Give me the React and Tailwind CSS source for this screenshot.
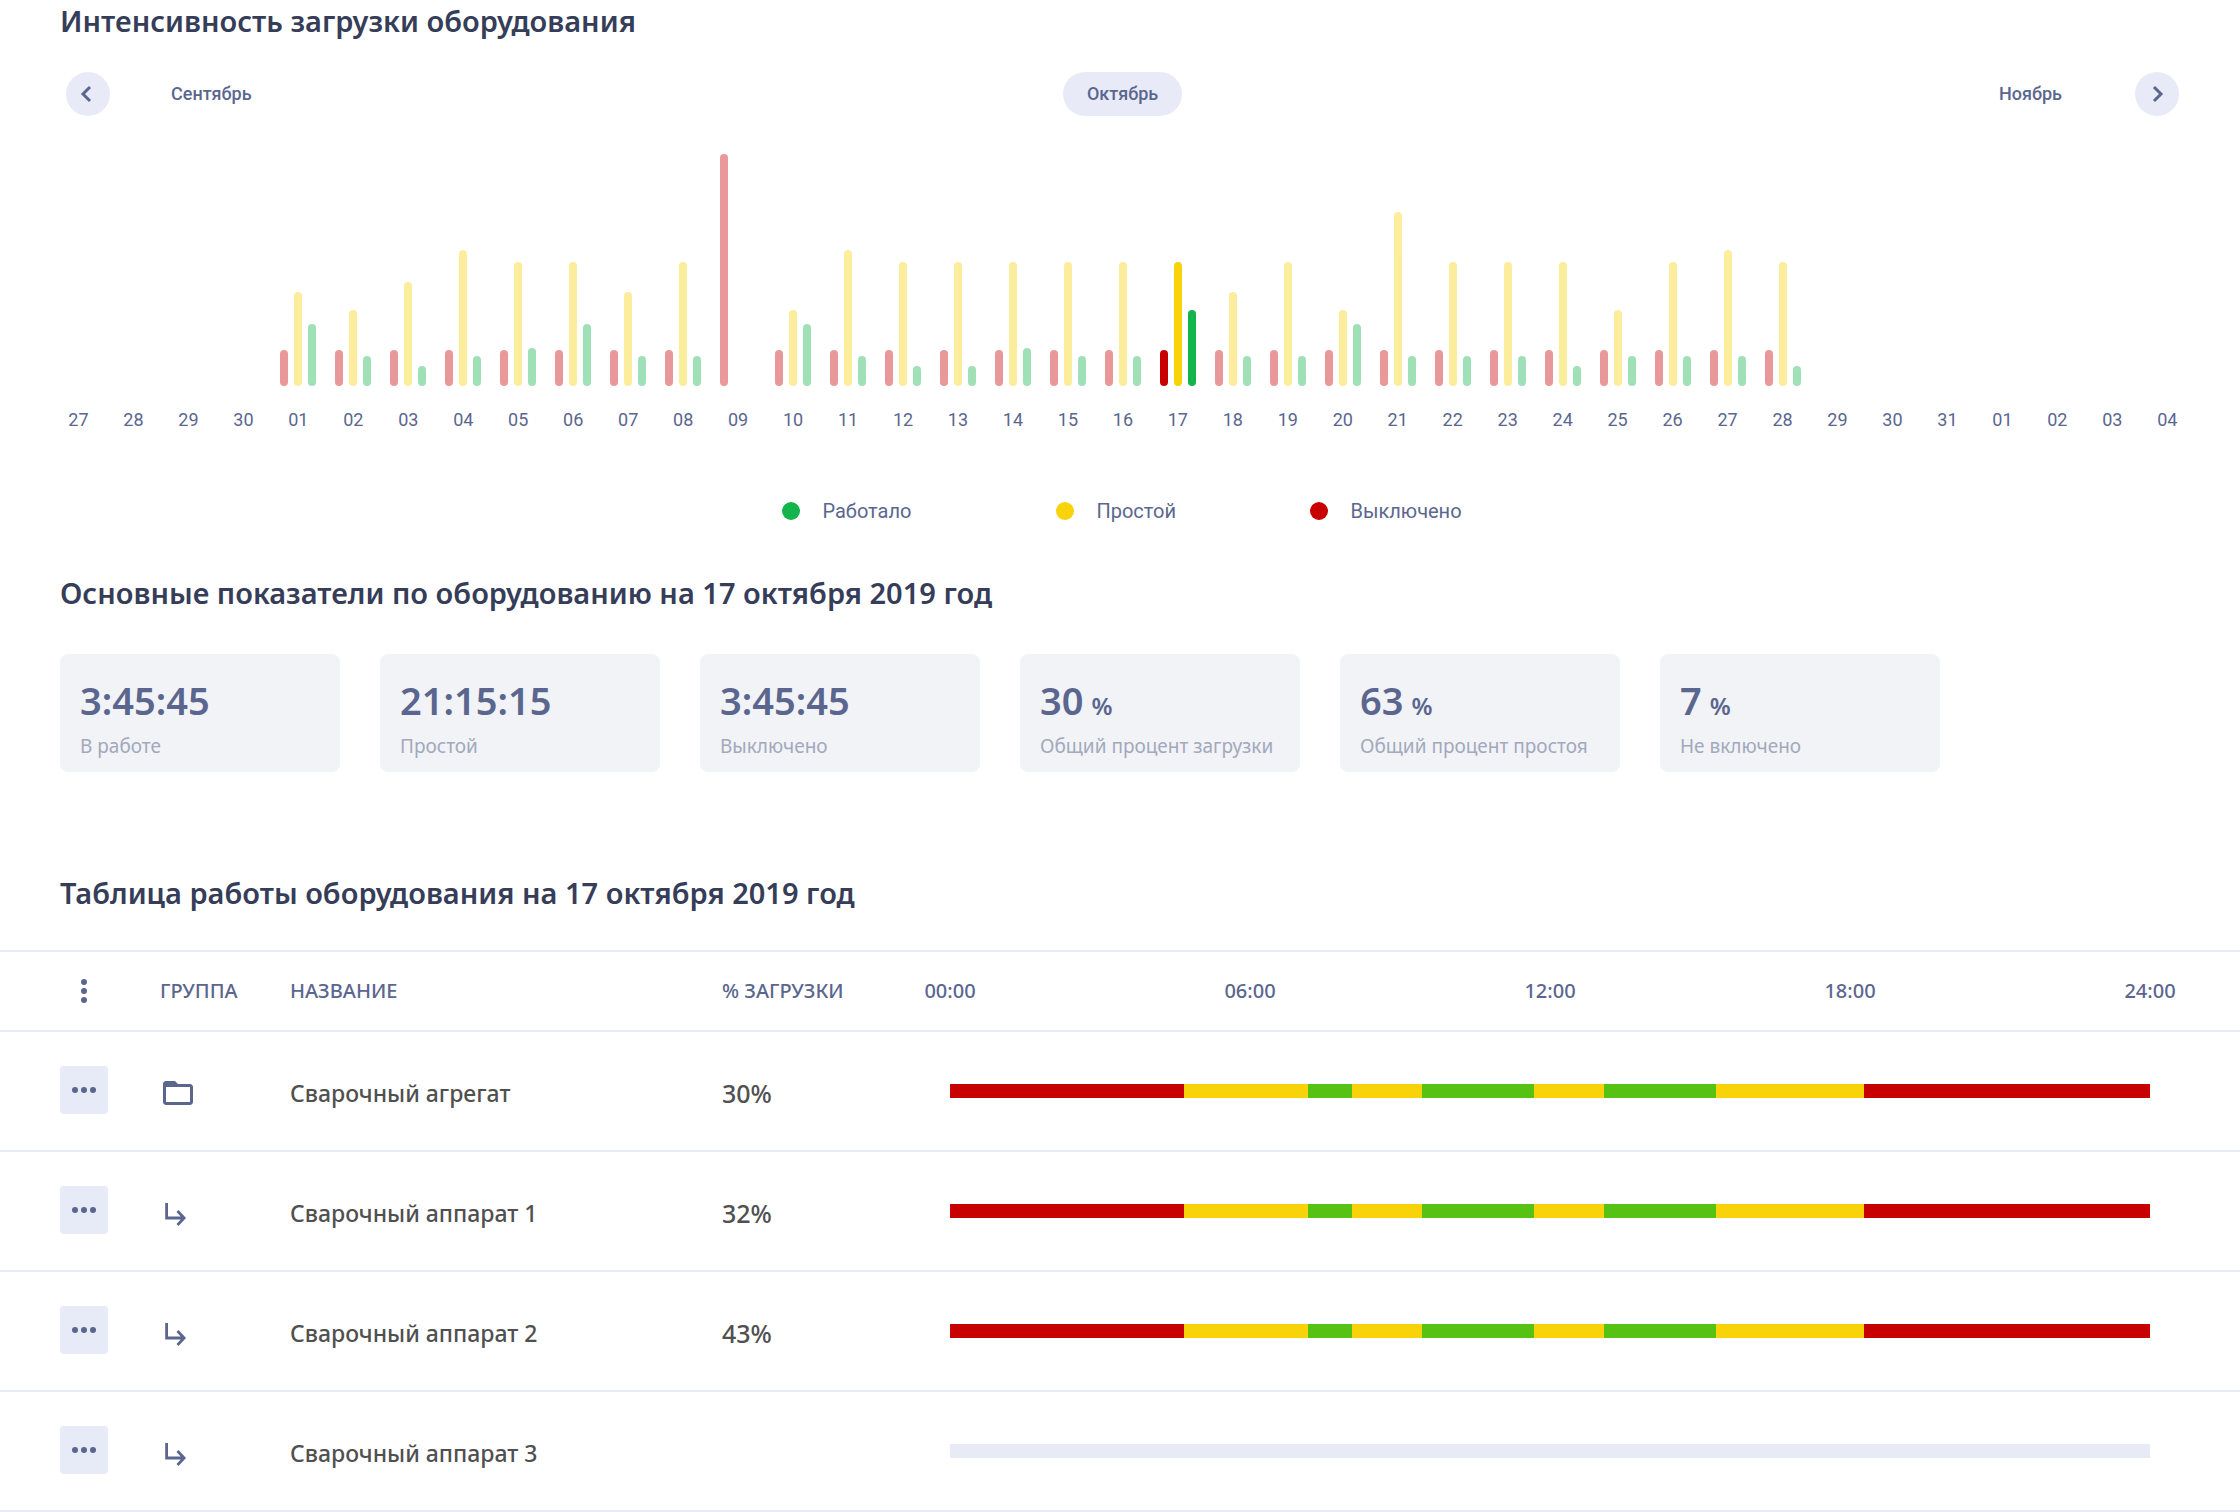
const days = [
  { day: '27' }, { day: '28' }, { day: '29' }, { day: '30' },
  { day: '01', off: 36, idle: 94, work: 62 },
  { day: '02', off: 36, idle: 76, work: 30 },
  { day: '03', off: 36, idle: 104, work: 20 },
  { day: '04', off: 36, idle: 136, work: 30 },
  { day: '05', off: 36, idle: 124, work: 38 },
  { day: '06', off: 36, idle: 124, work: 62 },
  { day: '07', off: 36, idle: 94, work: 30 },
  { day: '08', off: 36, idle: 124, work: 30 },
  { day: '09', off: 232, idle: 0, work: 0 },
  { day: '10', off: 36, idle: 76, work: 62 },
  { day: '11', off: 36, idle: 136, work: 30 },
  { day: '12', off: 36, idle: 124, work: 20 },
  { day: '13', off: 36, idle: 124, work: 20 },
  { day: '14', off: 36, idle: 124, work: 38 },
  { day: '15', off: 36, idle: 124, work: 30 },
  { day: '16', off: 36, idle: 124, work: 30 },
  { day: '17', off: 36, idle: 124, work: 76, active: true },
  { day: '18', off: 36, idle: 94, work: 30 },
  { day: '19', off: 36, idle: 124, work: 30 },
  { day: '20', off: 36, idle: 76, work: 62 },
  { day: '21', off: 36, idle: 174, work: 30 },
  { day: '22', off: 36, idle: 124, work: 30 },
  { day: '23', off: 36, idle: 124, work: 30 },
  { day: '24', off: 36, idle: 124, work: 20 },
  { day: '25', off: 36, idle: 76, work: 30 },
  { day: '26', off: 36, idle: 124, work: 30 },
  { day: '27', off: 36, idle: 136, work: 30 },
  { day: '28', off: 36, idle: 124, work: 20 },
  { day: '29' }, { day: '30' }, { day: '31' },
  { day: '01' }, { day: '02' }, { day: '03' }, { day: '04' },
];

const legend = [
  { label: 'Работало', color: 'bg-[#14b44c]' },
  { label: 'Простой', color: 'bg-[#f9d30a]' },
  { label: 'Выключено', color: 'bg-[#c80000]' },
];

const stats = [
  { value: '3:45:45', label: 'В работе' },
  { value: '21:15:15', label: 'Простой' },
  { value: '3:45:45', label: 'Выключено' },
  { value: '30', unit: '%', label: 'Общий процент загрузки' },
  { value: '63', unit: '%', label: 'Общий процент простоя' },
  { value: '7', unit: '%', label: 'Не включено' },
];

const hours = ['00:00', '06:00', '12:00', '18:00', '24:00'];

// parts of the day, 1200 parts = 24 hours
const shift = [
  ['off', 234], ['idle', 124], ['work', 44], ['idle', 70], ['work', 112],
  ['idle', 70], ['work', 112], ['idle', 148], ['off', 286],
];

const segmentColors = {
  off: 'bg-[#c80000]',
  idle: 'bg-[#f9d30a]',
  work: 'bg-[#55c214]',
};

const rows = [
  { name: 'Сварочный агрегат', load: '30%', folder: true, segments: shift },
  { name: 'Сварочный аппарат 1', load: '32%', segments: shift },
  { name: 'Сварочный аппарат 2', load: '43%', segments: shift },
  { name: 'Сварочный аппарат 3', load: '', segments: [] },
];

function Title({ children }) {
  return <h2 className="px-[60px] text-[29px] leading-[42px] font-semibold text-[#363d58]">{children}</h2>;
}

function ArrowButton({ label, d }) {
  return (
    <button aria-label={label} className="size-11 shrink-0 cursor-pointer rounded-full bg-[#e8ebf7]">
      <svg viewBox="0 0 44 44" className="size-11" fill="none" stroke="currentColor" strokeWidth="3">
        <path d={d} />
      </svg>
    </button>
  );
}

function Months() {
  return (
    <div className="mt-[30px] grid grid-cols-[1fr_auto_1fr] items-center pr-[61px] pl-[66px] font-[Roboto,sans-serif] text-lg font-medium">
      <div className="flex items-center gap-[61px]">
        <ArrowButton label="Предыдущий месяц" d="M24 15l-7 7 7 7" />
        <button className="cursor-pointer">Сентябрь</button>
      </div>
      <button className="h-11 cursor-pointer rounded-full bg-[#e8ebf7] px-6">Октябрь</button>
      <div className="flex items-center justify-end gap-[73px]">
        <button className="cursor-pointer">Ноябрь</button>
        <ArrowButton label="Следующий месяц" d="M19 15l7 7-7 7" />
      </div>
    </div>
  );
}

function Bar({ height, color }) {
  return <div className={`w-2 rounded-full ${color}`} style={{ height }} />;
}

function Chart() {
  return (
    <div className="mt-[38px] flex pr-[45px] pl-[51px] font-[Roboto,sans-serif]">
      {days.map((d, i) => (
        <div key={i} className="flex flex-1 flex-col items-center">
          <div className={`flex h-[232px] items-end gap-1.5 ${d.active ? '' : 'opacity-40'}`}>
            {d.off > 0 && (
              <>
                <Bar height={d.off} color="bg-[#c80000]" />
                <Bar height={d.idle} color="bg-[#f9d30a]" />
                <Bar height={d.work} color="bg-[#14b44c]" />
              </>
            )}
          </div>
          <div className="mt-6 text-lg leading-5">{d.day}</div>
        </div>
      ))}
    </div>
  );
}

function Legend() {
  return (
    <ul className="mt-[67px] grid grid-cols-[274px_254px_auto] justify-center pl-1 font-[Roboto,sans-serif] text-xl leading-7">
      {legend.map((l) => (
        <li key={l.label} className="flex items-center gap-[22px]">
          <span className={`size-[18px] rounded-full ${l.color}`} />
          {l.label}
        </li>
      ))}
    </ul>
  );
}

function Stats() {
  return (
    <div className="mt-10 flex flex-wrap gap-10 px-[60px]">
      {stats.map((s, i) => (
        <div key={i} className="w-[280px] rounded-lg bg-[#f1f3f7] px-5 pt-6 pb-3">
          <div className="text-[38px] leading-[44px] font-semibold">
            {s.value}
            {s.unit && <span className="ml-2 text-2xl leading-none">{s.unit}</span>}
          </div>
          <div className="mt-2.5 text-[19px] leading-7 whitespace-nowrap text-[#a3a8bc]">{s.label}</div>
        </div>
      ))}
    </div>
  );
}

function FolderIcon() {
  return (
    <svg viewBox="0 0 24 24" className="size-9" fill="currentColor">
      <path d="M20 6h-8l-2-2H4c-1.1 0-2 .9-2 2v12c0 1.1.9 2 2 2h16c1.1 0 2-.9 2-2V8c0-1.1-.9-2-2-2zm0 12H4V8h16v10z" />
      <path d="M3 5h7l2 3H3z" />
    </svg>
  );
}

function ChildIcon() {
  return (
    <svg viewBox="0 0 36 36" className="size-9" fill="none" stroke="currentColor" strokeWidth="2.8">
      <path d="M6.6 8v15H24M17.5 16l6.6 7-6.6 7" />
    </svg>
  );
}

function Timeline({ segments }) {
  return (
    <div className="flex h-3.5 bg-[#e8eaf6]">
      {segments.map(([type, size], i) => (
        <div key={i} className={segmentColors[type]} style={{ width: `${size / 12}%` }} />
      ))}
    </div>
  );
}

function EquipmentTable() {
  return (
    <table className="mt-9 w-full table-fixed border-t-2 border-[#e8eaf6]">
      <colgroup>
        <col className="w-[160px]" />
        <col className="w-[130px]" />
        <col className="w-[432px]" />
        <col className="w-[228px]" />
        <col />
      </colgroup>
      <thead>
        <tr className="h-20 border-b-2 border-[#e8eaf6] text-left text-xl">
          <th className="pl-[60px]">
            <button aria-label="Меню таблицы" className="flex size-12 cursor-pointer items-center justify-center">
              <svg viewBox="0 0 24 24" className="size-6" fill="currentColor">
                <circle cx="12" cy="3" r="3" />
                <circle cx="12" cy="12" r="3" />
                <circle cx="12" cy="21" r="3" />
              </svg>
            </button>
          </th>
          <th className="font-medium">ГРУППА</th>
          <th className="font-medium">НАЗВАНИЕ</th>
          <th className="font-medium">% ЗАГРУЗКИ</th>
          <th className="pr-[90px] font-medium">
            <div className="-mx-7 flex justify-between">
              {hours.map((h) => <span key={h} className="w-14 text-center">{h}</span>)}
            </div>
          </th>
        </tr>
      </thead>
      <tbody>
        {rows.map((r) => (
          <tr key={r.name} className="h-[120px] border-b-2 border-[#e8eaf6]">
            <td className="pb-0.5 pl-[60px]">
              <button aria-label={`Действия: ${r.name}`} className="flex size-12 cursor-pointer items-center justify-center rounded bg-[#e7ebf7]">
                <svg viewBox="0 0 24 24" className="size-6" fill="currentColor">
                  <circle cx="3" cy="12" r="3" />
                  <circle cx="12" cy="12" r="3" />
                  <circle cx="21" cy="12" r="3" />
                </svg>
              </button>
            </td>
            <td className="pt-1">{r.folder ? <FolderIcon /> : <ChildIcon />}</td>
            <td className="pt-1 text-[23px] leading-7 font-medium text-[#505050]">{r.name}</td>
            <td className="pt-1 text-[25px] leading-7 font-medium text-[#505050]">{r.load}</td>
            <td className="pr-[90px]"><Timeline segments={r.segments} /></td>
          </tr>
        ))}
      </tbody>
    </table>
  );
}

export default function App() {
  return (
    <main className="bg-white font-['Noto_Sans',sans-serif] text-[#5b668f]">
      <section>
        <Title>Интенсивность загрузки оборудования</Title>
        <Months />
        <Chart />
        <Legend />
      </section>

      <section className="mt-[47px]">
        <Title>Основные показатели по оборудованию на 17 октября 2019 год</Title>
        <Stats />
      </section>

      <section className="mt-[100px]">
        <Title>Таблица работы оборудования на 17 октября 2019 год</Title>
        <EquipmentTable />
      </section>
    </main>
  );
}
